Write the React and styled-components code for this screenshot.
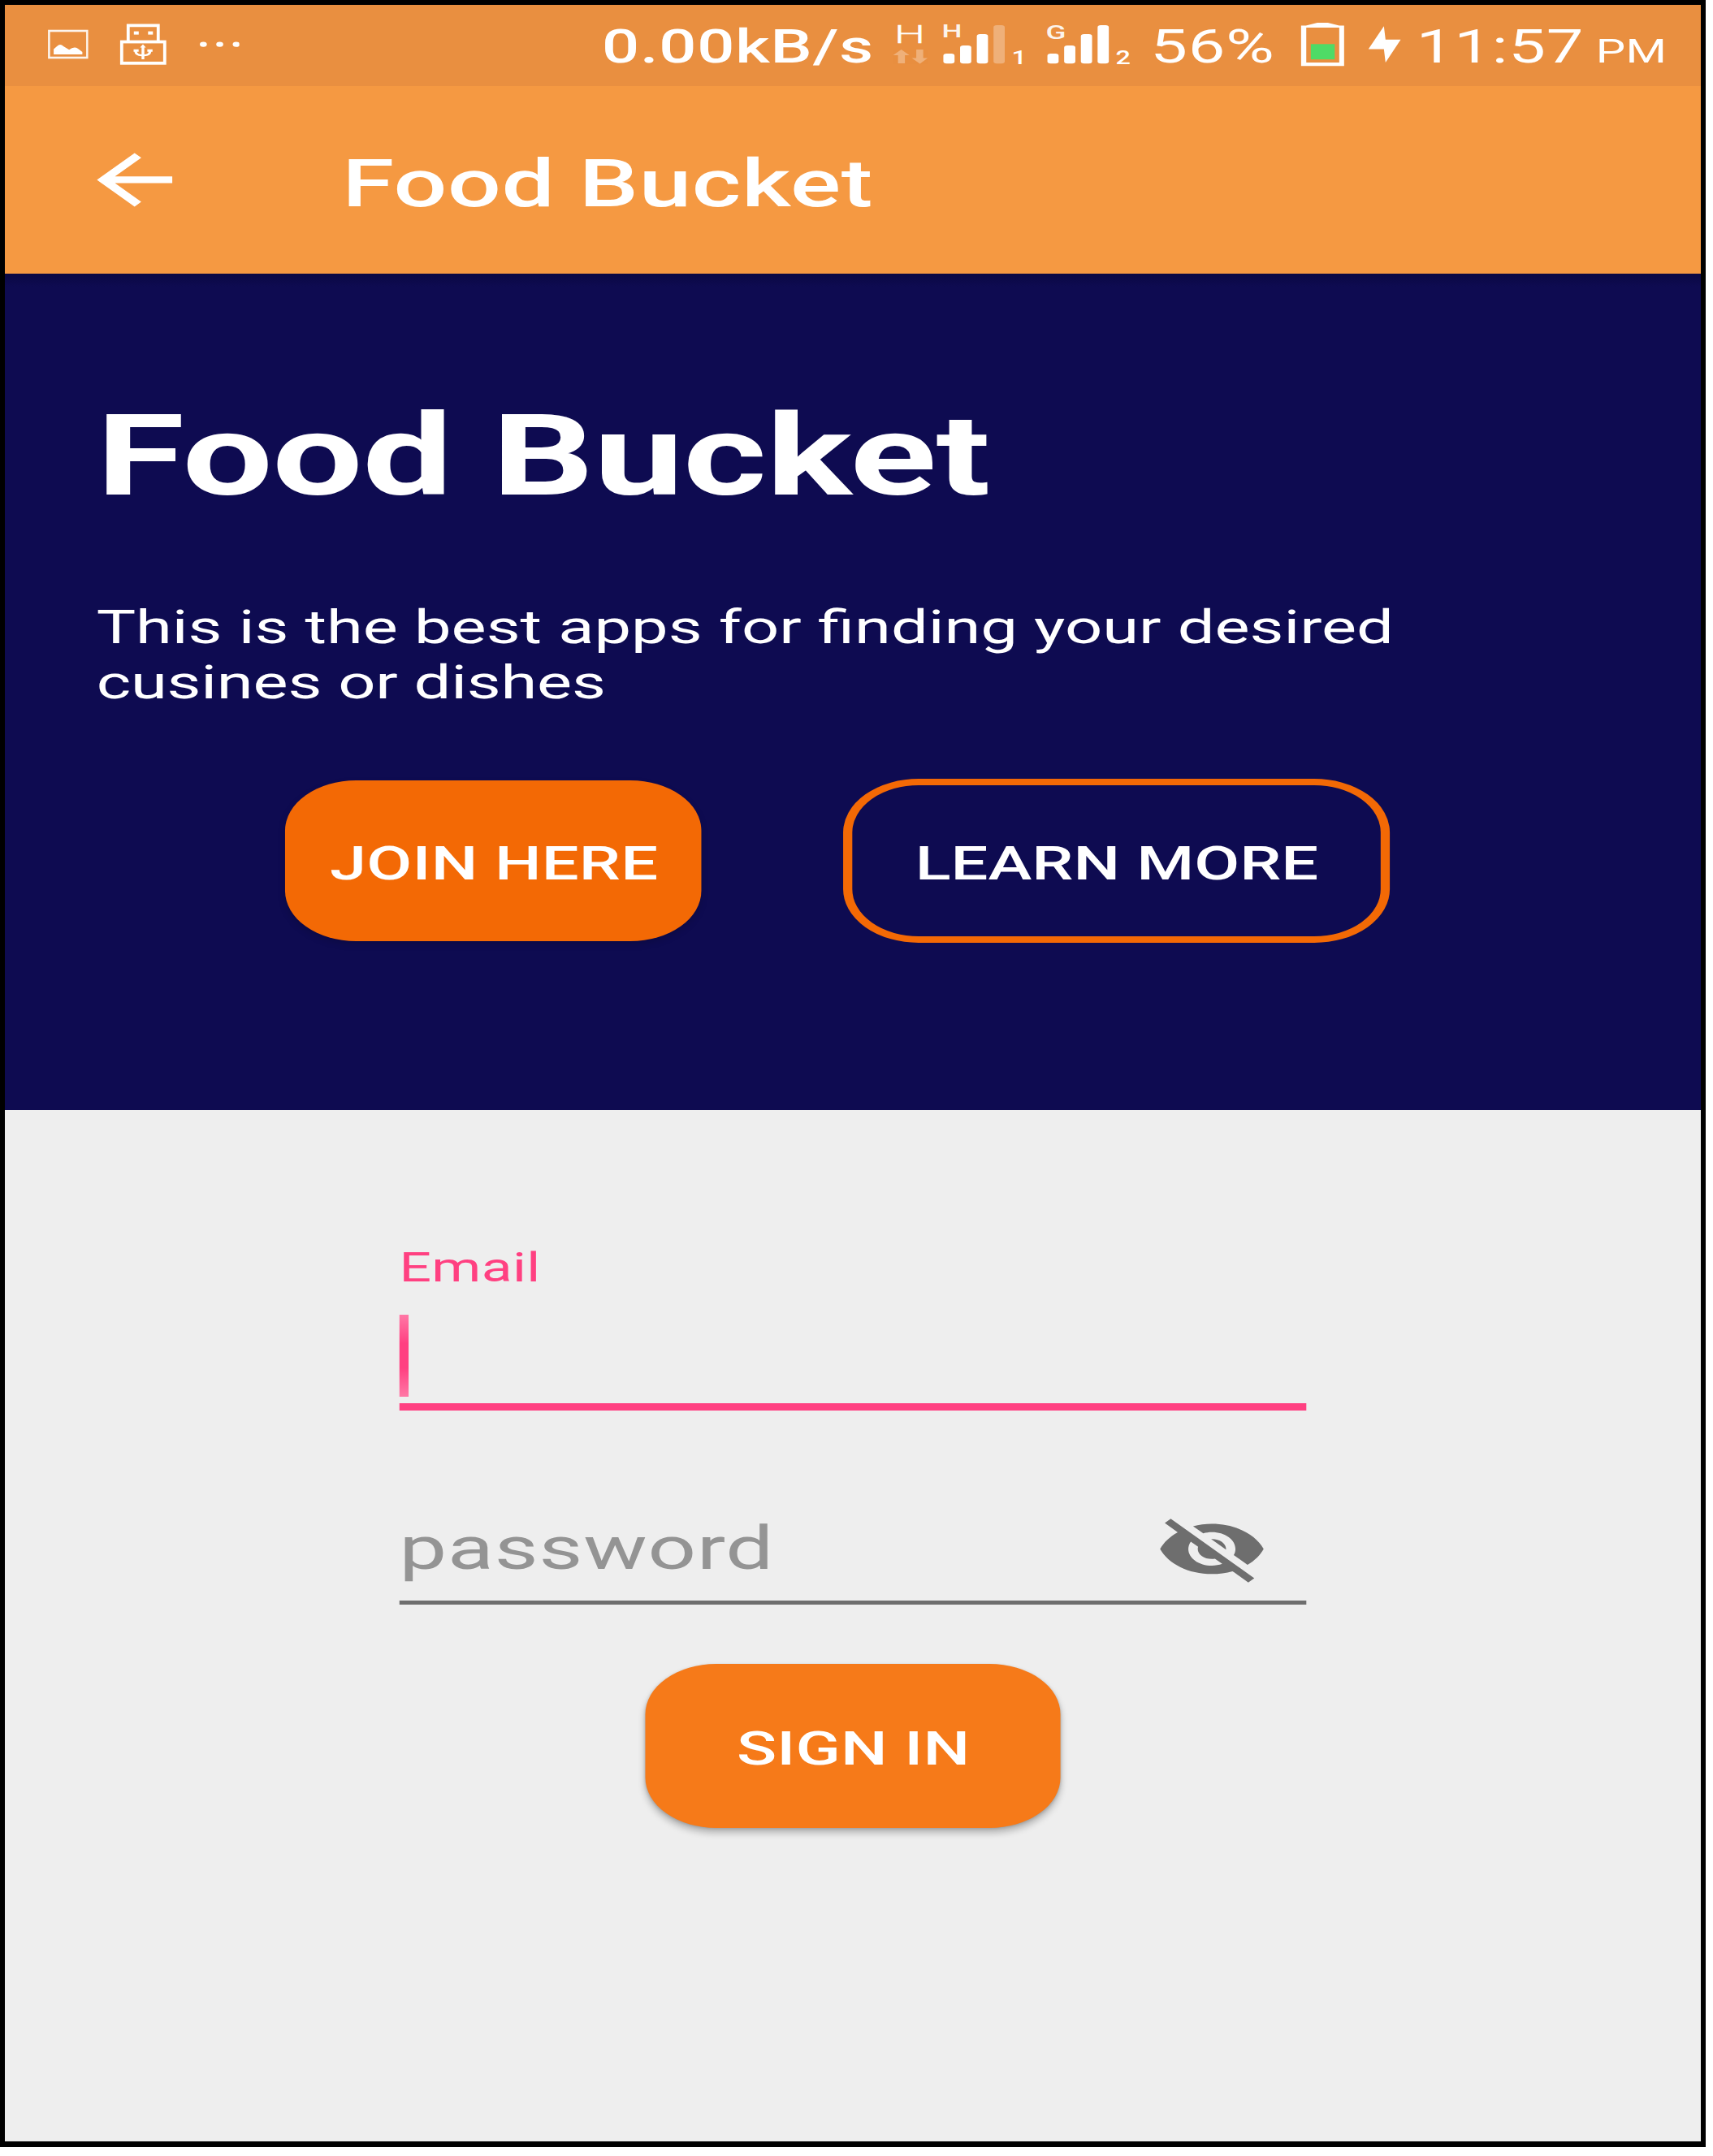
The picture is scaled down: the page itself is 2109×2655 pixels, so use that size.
import React from "react";
import styled, { createGlobalStyle } from "styled-components";

/* The phone screen is laid out upright and widened by this factor. */
const STRETCH = 1.408;
const x = (n) => `${n / STRETCH}px`;

const GlobalStyle = createGlobalStyle`
  * { box-sizing: border-box; }
  html, body { margin: 0; padding: 0; background: #fff; }
  body { font-family: Roboto, "Liberation Sans", sans-serif; }
`;

const Frame = styled.div`
  width: 2100px;
  height: 2644px;
  border: 6px solid #000;
  border-bottom-width: 7px;
  overflow: hidden;
  background: #eee;
`;

const Screen = styled.div`
  width: ${x(2088)};
  height: 2631px;
  display: flex;
  flex-direction: column;
  transform: scaleX(${STRETCH});
  transform-origin: left top;
`;

const StatusBar = styled.div`
  display: flex;
  height: 100px;
  flex: none;
  padding-left: ${x(51.5)};
  background: #e98f40;
  color: #fff;
`;

const Glyph = styled.svg`
  display: block;
  flex: none;
  width: ${(p) => x(p.$w)};
  height: ${(p) => p.$h || 100}px;
  margin-left: ${(p) => x(p.$gap || 0)};
`;

const StatusText = styled.span`
  flex: none;
  width: ${(p) => x(p.$w)};
  margin-left: ${(p) => x(p.$gap || 0)};
  font-size: 57.7px;
  line-height: 103px;
  font-weight: ${(p) => p.$weight || 400};
  letter-spacing: 0.6px;
  white-space: pre;
`;

const Meridiem = styled.span`
  font-size: 41px;
  letter-spacing: 0.2px;
`;

const AppBar = styled.header`
  display: flex;
  align-items: center;
  flex: none;
  height: 230.5px;
  background: #f59942;
  color: #fff;
`;

const AppTitle = styled.h1`
  margin: 0 0 0 ${x(185.4)};
  padding-top: 10px;
  font-size: 82.4px;
  line-height: 96px;
  font-weight: 500;
  letter-spacing: 0.44px;
`;

const Hero = styled.section`
  flex: none;
  height: 1030px;
  padding: 142.5px 0 0 80px;
  background: linear-gradient(#0a0843 0, #0e0b51 16px);
  color: #fff;
`;

const Heading = styled.h2`
  margin: 0;
  font-size: 140px;
  line-height: 164px;
  font-weight: 700;
  letter-spacing: -0.25px;
`;

const Blurb = styled.p`
  margin: 95px 0 0;
  width: ${x(1700)};
  font-size: 57.7px;
  line-height: 68px;
`;

const BlurbEnd = styled.span`
  letter-spacing: -0.13px;
`;

const Actions = styled.div`
  display: flex;
  align-items: center;
  gap: ${x(174.3)};
  margin-top: 85.2px;
  padding-left: ${x(232.8)};
`;

const Button = styled.button`
  flex: none;
  width: ${(p) => x(p.$w)};
  height: ${(p) => p.$h}px;
  padding: 5px 0 0 1px;
  border: ${(p) => (p.$outlined ? "8.3px solid #f36905" : "0")};
  border-radius: ${(p) => (p.$outlined ? 66 : 62)}px;
  background: ${(p) => (p.$outlined ? "transparent" : p.$fill)};
  box-shadow: ${(p) => p.$shadow || "none"};
  color: #fff;
  font-family: inherit;
  font-size: 57.7px;
  line-height: 68px;
  font-weight: 500;
  letter-spacing: ${(p) => (p.$outlined ? 0 : 0.15)}px;
  text-align: center;
  white-space: nowrap;
`;

const Form = styled.form`
  display: flex;
  flex-direction: column;
  align-items: center;
  flex: 1;
  padding-top: 165.3px;
  background: #eee;
`;

const Field = styled.div`
  display: flex;
  flex-direction: column;
  width: ${x(1117)};
  border-bottom: ${(p) => (p.$active ? "9px solid #ff4081" : "5px solid #6e6e6e")};
  margin-top: ${(p) => p.$top || 0}px;
  padding-bottom: ${(p) => (p.$active ? 8 : 14)}px;
`;

const Label = styled.label`
  font-size: 49.4px;
  line-height: 58px;
  letter-spacing: 0.25px;
  color: #ff4081;
`;

const Caret = styled.div`
  width: ${x(11.6)};
  height: 101px;
  margin-top: 29px;
  background: linear-gradient(#ff78a6, #ff4081 35%, #ff4081 65%, #ff78a6);
`;

const PasswordRow = styled.div`
  display: flex;
  justify-content: space-between;
  padding-right: ${x(46.8)};
`;

const Placeholder = styled.span`
  font-size: 74.2px;
  line-height: 98px;
  letter-spacing: 0.6px;
  color: #949494;
`;

const SubmitSlot = styled.div`
  margin-top: 73.5px;
`;

function PictureIcon() {
  return (
    <Glyph $w={51} viewBox="58 6 51 100" preserveAspectRatio="none">
      <rect x="60.3" y="38" width="47" height="33" fill="none" stroke="#fff" strokeWidth="2.6" opacity=".9" />
      <path d="M66 67V60.5L70 57q4-4 8 0l7 4.3q6-4.6 11-1.3l5.3 4V67z" fill="#fff" />
    </Glyph>
  );
}

function UsbIcon() {
  return (
    <Glyph $w={59} $gap={39} viewBox="148 6 59 100" preserveAspectRatio="none">
      <g fill="none" stroke="#fff" strokeWidth="3.8">
        <path d="M159 50V31.3h37V50" />
        <rect x="151" y="51.5" width="53" height="26.3" />
      </g>
      <g fill="#fff">
        <rect x="166" y="38.6" width="6" height="4" />
        <rect x="183.5" y="38.6" width="6" height="4" />
        <path d="M177.2 54.5l3.6 4h-1.9V67q5-.4 5.3-3.3h-1.6v-3h6.4v3h-1.5q-.4 5-8.6 5.5V73h-3.4v-3.8q-8.4-.6-8.8-5.5h-1v-3h6.2v3h-2q.5 3 5.6 3.3v-8.5h-1.9z" />
      </g>
    </Glyph>
  );
}

function MoreIcon() {
  return (
    <Glyph $w={50} $gap={38.5} viewBox="245 6 50 100" preserveAspectRatio="none">
      {[250, 270.2, 290.5].map((cx) => (
        <ellipse key={cx} cx={cx} cy="54.6" rx="4.3" ry="3.2" fill="#fff" />
      ))}
    </Glyph>
  );
}

function DataIcon() {
  return (
    <Glyph $w={44} viewBox="1098 6 44 100" preserveAspectRatio="none">
      <text x="1100.5" y="52.6" fontSize="32" fontWeight="300" textLength="38" lengthAdjust="spacingAndGlyphs" fill="#fff" stroke="#fff" strokeWidth=".4">H</text>
      <g fill="#fff" opacity=".3">
        <path d="M1109 61l10 7h-5.5v10h-8.5V68h-6z" />
        <path d="M1132 78.5l-10-7h5.5V61h8.5v10.500h5.500z" />
      </g>
    </Glyph>
  );
}

function Signal({ gap, letter, sim, level }) {
  const tops = [66, 56, 42, 31];
  const round = letter === "G";
  return (
    <Glyph $w={112} $gap={gap} viewBox="-6 6 112 100" preserveAspectRatio="none">
      <text x="-1.5" y={round ? 48 : 46} fontSize={round ? 23 : 21.5} fontWeight="500" textLength="25" lengthAdjust="spacingAndGlyphs" fill="#fff" opacity=".9">{letter}</text>
      {tops.map((top, i) => (
        <rect key={top} x={0.5 + i * 20.6} y={top} width="13.8" height={78.3 - top} rx="4" ry="2.8" fill="#fff" opacity={i < level ? 1 : 0.3} />
      ))}
      <text x="84.5" y="78.7" fontSize="23" fontWeight="500" textLength="18.5" lengthAdjust="spacingAndGlyphs" fill="#fff">{sim}</text>
    </Glyph>
  );
}

function BatteryIcon() {
  return (
    <Glyph $w={57} viewBox="1600 6 57 100" preserveAspectRatio="none">
      <path fillRule="evenodd" fill="#fff" d="M1602 31.5h6l14-3.5h13l14 3.5h6V81.3h-53zM1608.4 34v43h40.6V34z" />
      <rect x="1614" y="54.3" width="29.4" height="18.8" fill="#4fdb66" />
    </Glyph>
  );
}

function BoltIcon() {
  return (
    <Glyph $w={41} $gap={27} viewBox="1684 6 41 100" preserveAspectRatio="none">
      <path fill="#fff" d="M1703.5 32.3l2 16.5h18.7L1705.5 77l-2-16.5h-19.1z" />
    </Glyph>
  );
}

function BackIcon() {
  return (
    <Glyph $w={139.2} $h={98.9} $gap={90.6} viewBox="0 0 24 24" preserveAspectRatio="none">
      <path fill="#fff" d="M20 11H7.83l5.59-5.59L12 4l-8 8 8 8 1.41-1.41L7.83 13H20v-2z" />
    </Glyph>
  );
}

function EyeOffIcon() {
  return (
    <Glyph $w={139.2} $h={98.9} viewBox="0 0 24 24" preserveAspectRatio="none">
      <path
        fill="#6e6e6e"
        d="M12 7c2.76 0 5 2.24 5 5 0 .65-.13 1.26-.36 1.83l2.92 2.92c1.51-1.26 2.7-2.89 3.43-4.75-1.73-4.39-6-7.5-11-7.5-1.4 0-2.74.25-3.98.7l2.16 2.16C10.74 7.13 11.35 7 12 7zM2 4.27l2.28 2.28.46.46C3.08 8.3 1.78 10.02 1 12c1.73 4.39 6 7.5 11 7.5 1.55 0 3.03-.3 4.38-.84l.42.42L19.73 22 21 20.73 3.27 3 2 4.27zM7.53 9.8l1.55 1.55c-.05.21-.08.43-.08.65 0 1.66 1.34 3 3 3 .22 0 .44-.03.65-.08l1.55 1.55c-.67.33-1.41.53-2.2.53-2.76 0-5-2.24-5-5 0-.79.2-1.53.53-2.2zm4.31-.78l3.15 3.15.02-.16c0-1.66-1.34-3-3-3l-.17.01z"
      />
    </Glyph>
  );
}

export default function App() {
  return (
    <>
      <GlobalStyle />
      <Frame>
        <Screen>
          <StatusBar>
            <PictureIcon />
            <UsbIcon />
            <MoreIcon />
            <StatusText $w={358} $gap={446} $weight={500}>0.00kB/s</StatusText>
            <DataIcon />
            <Signal gap={11.5} letter="H" sim="1" level={3} />
            <Signal gap={16} letter="G" sim="2" level={4} />
            <StatusText $w={184} $gap={22}>56%</StatusText>
            <BatteryIcon />
            <BoltIcon />
            <StatusText $w={320} $gap={18.5}>
              11:57<Meridiem> PM</Meridiem>
            </StatusText>
          </StatusBar>
          <AppBar>
            <BackIcon />
            <AppTitle>Food Bucket</AppTitle>
          </AppBar>
          <Hero>
            <Heading>Food Bucket</Heading>
            <Blurb>
              This is the best apps for finding your desired
              <br />
              <BlurbEnd>cusines or dishes</BlurbEnd>
            </Blurb>
            <Actions>
              <Button type="button" $w={512} $h={198} $fill="#f36905" $shadow="0 4px 7px rgba(0,0,0,.15)">JOIN HERE</Button>
              <Button type="button" $w={673.2} $h={201.7} $outlined>LEARN MORE</Button>
            </Actions>
          </Hero>
          <Form>
            <Field $active>
              <Label>Email</Label>
              <Caret />
            </Field>
            <Field $top={121}>
              <PasswordRow>
                <Placeholder>password</Placeholder>
                <EyeOffIcon />
              </PasswordRow>
            </Field>
            <SubmitSlot>
              <Button type="button" $w={512} $h={201.7} $fill="#f67a19" $shadow="0 6px 7px rgba(0,0,0,.25), 0 1px 3px rgba(0,0,0,.15)">SIGN IN</Button>
            </SubmitSlot>
          </Form>
        </Screen>
      </Frame>
    </>
  );
}
